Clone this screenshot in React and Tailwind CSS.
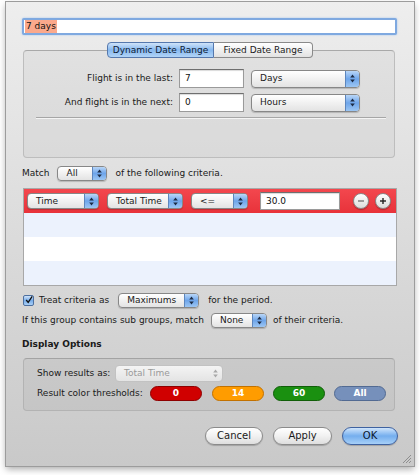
import React from 'react';

// Little up/down arrows shown in the blue end of an Aqua popup
const UpDown = ({ color = '#1c2b44' }) => (
  <svg width="5" height="9" viewBox="0 0 5 9">
    <path d="M2.5 0.5 L4.8 3.5 H0.2 Z" fill={color} />
    <path d="M2.5 8.5 L4.8 5.5 H0.2 Z" fill={color} />
  </svg>
);

const Popup = ({ label, className = '', disabled = false }) => (
  <div
    className={`flex items-stretch overflow-hidden rounded-[4px] border bg-gradient-to-b ${
      disabled
        ? 'border-[#c2c2c2] from-[#f4f4f4] to-[#e4e4e4] text-[#9a9a9a]'
        : 'border-[#878787] from-white to-[#e3e3e3] text-[#1a1a1a] shadow-[0_1px_1px_rgba(0,0,0,0.18)]'
    } ${className}`}
  >
    <span className="flex flex-1 items-center truncate pl-[8px]">{label}</span>
    {disabled ? (
      <span className="flex w-[14px] items-center justify-center">
        <UpDown color="#a8a8a8" />
      </span>
    ) : (
      <span className="flex w-[14px] items-center justify-center border-l border-[#5d86bd] bg-gradient-to-b from-[#b9d6f7] via-[#6ea5ea] to-[#9cc6f3]">
        <UpDown />
      </span>
    )}
  </div>
);

const TextField = ({ value, className = '' }) => (
  <div
    className={`flex items-center border border-[#9a9a9a] border-t-[#6f6f6f] bg-white pl-[5px] text-[#111] shadow-[inset_0_1px_1px_rgba(0,0,0,0.15)] ${className}`}
  >
    {value}
  </div>
);

const Pill = ({ label, className }) => (
  <div
    className={`flex h-[15px] w-[52px] items-center justify-center rounded-full border text-[9px] font-bold text-white ${className}`}
  >
    {label}
  </div>
);

const RoundButton = ({ sign }) => (
  <div className="flex h-[16px] w-[16px] items-center justify-center rounded-full border border-[#8a8a8a] bg-gradient-to-b from-white to-[#dcdcdc] shadow-[0_1px_1px_rgba(0,0,0,0.25)]">
    <svg width="8" height="8" viewBox="0 0 8 8">
      <rect x="1" y="3.3" width="6" height="1.4" fill={sign === '+' ? '#222' : '#7a7a7a'} />
      {sign === '+' && <rect x="3.3" y="1" width="1.4" height="6" fill="#222" />}
    </svg>
  </div>
);

const PushButton = ({ label, primary, className = '' }) => (
  <div
    className={`flex h-[18px] items-center justify-center rounded-full border text-[10px] ${
      primary
        ? 'border-[#3f62a0] bg-gradient-to-b from-[#d0e5fb] via-[#74aeee] to-[#a7d0f8] text-[#0c1730]'
        : 'border-[#8b8b8b] bg-gradient-to-b from-white via-[#f1f1f1] to-[#dedede] text-[#1a1a1a]'
    } shadow-[0_1px_1px_rgba(0,0,0,0.2)] ${className}`}
  >
    {label}
  </div>
);

export default function App() {
  return (
    <div className="h-[475px] w-[420px] overflow-hidden bg-white pt-[2px] pl-[6px] font-['Lucida_Grande','DejaVu_Sans',sans-serif] text-[9px] leading-none text-[#1a1a1a]">
      {/* Sheet window */}
      <div className="relative flex h-[464px] w-[408px] flex-col bg-gradient-to-b from-[#eeeeee] to-[#c9c9c9] shadow-[0_0_0_1px_#9c9c9c,0_3px_7px_rgba(0,0,0,0.35)]">
        {/* Name field */}
        <div className="ml-[16px] mt-[16px] flex h-[17px] w-[375px] items-center rounded-[2px] border-[2px] border-[#7fa9e0] bg-white pl-[1px] shadow-[0_0_2px_#9cc0ef]">
          <span className="flex h-[13px] items-center bg-[#fba98c] px-[1px] text-[#111]">7 days</span>
        </div>

        {/* Date range tab box */}
        <div className="relative z-10 mt-[7px] ml-[101px] flex h-[16px] w-[206px]">
          <div className="flex w-[107px] items-center justify-center rounded-l-[4px] border border-[#5578ad] bg-gradient-to-b from-[#cfe3f9] via-[#86b8ef] to-[#b1d4f7] text-[#0d1a33]">
            Dynamic Date Range
          </div>
          <div className="flex flex-1 items-center justify-center rounded-r-[4px] border border-l-0 border-[#8a8a8a] bg-gradient-to-b from-white to-[#e2e2e2]">
            Fixed Date Range
          </div>
        </div>
        <div className="-mt-[8px] ml-[17px] flex h-[108px] w-[372px] flex-col rounded-[4px] border border-[#bdbdbd] border-t-[#a9a9a9] bg-black/[0.035]">
          <div className="mt-[18px] flex h-[19px] items-center">
            <span className="w-[149px] text-right">Flight is in the last:</span>
            <TextField value="7" className="ml-[6px] h-[19px] w-[65px]" />
            <Popup label="Days" className="ml-[7px] h-[18px] w-[109px]" />
          </div>
          <div className="mt-[5px] flex h-[19px] items-center">
            <span className="w-[149px] text-right">And flight is in the next:</span>
            <TextField value="0" className="ml-[6px] h-[19px] w-[65px]" />
            <Popup label="Hours" className="ml-[7px] h-[18px] w-[109px]" />
          </div>
          <div className="ml-[12px] mt-[5px] h-[2px] w-[350px] border-t border-b border-t-[#a6a6a6] border-b-[#f4f4f4]" />
        </div>

        {/* Match row */}
        <div className="ml-[16px] mt-[8px] flex h-[15px] items-center">
          <span>Match</span>
          <Popup label="All" className="ml-[8px] h-[15px] w-[50px]" />
          <span className="ml-[8px]">of the following criteria.</span>
        </div>

        {/* Criteria table */}
        <div className="ml-[17px] mt-[7px] flex w-[374px] flex-col border border-[#a8a8a8]">
          <div className="flex h-[24px] items-center bg-gradient-to-b from-[#f3474e] to-[#e8323a] pl-[3px]">
            <Popup label="Time" className="h-[16px] w-[72px]" />
            <Popup label="Total Time" className="ml-[8px] h-[16px] w-[76px]" />
            <Popup label="<=" className="ml-[8px] h-[16px] w-[57px]" />
            <TextField value="30.0" className="ml-[12px] h-[18px] w-[80px]" />
            <div className="ml-[13px]">
              <RoundButton sign="-" />
            </div>
            <div className="ml-[6px]">
              <RoundButton sign="+" />
            </div>
          </div>
          <div className="h-[24px] bg-[#ecf2fd]" />
          <div className="h-[24px] bg-white" />
          <div className="h-[24px] bg-[#ecf2fd]" />
        </div>

        {/* Treat criteria row */}
        <div className="ml-[17px] mt-[7px] flex h-[15px] items-center">
          <div className="flex h-[11px] w-[11px] items-center justify-center rounded-[2px] border border-[#4d6f9f] bg-gradient-to-b from-[#cfe2f8] via-[#78adea] to-[#a9cff6]">
            <svg width="10" height="10" viewBox="0 0 10 10" className="-mt-[2px] ml-[1px]">
              <path d="M1.5 5 L4 8 L9 0.5" stroke="#111" strokeWidth="1.6" fill="none" />
            </svg>
          </div>
          <span className="ml-[5px]">Treat criteria as</span>
          <Popup label="Maximums" className="ml-[9px] h-[15px] w-[81px]" />
          <span className="ml-[9px]">for the period.</span>
        </div>
        <div className="ml-[16px] mt-[5px] flex h-[15px] items-center">
          <span>If this group contains sub groups, match</span>
          <Popup label="None" className="ml-[7px] h-[15px] w-[56px]" />
          <span className="ml-[6px]">of their criteria.</span>
        </div>

        {/* Display options */}
        <div className="ml-[16px] mt-[12px] font-bold">Display Options</div>
        <div className="ml-[17px] mt-[9px] flex h-[53px] w-[372px] flex-col rounded-[4px] border border-[#b3b3b3] border-t-[#a3a3a3] bg-black/[0.035]">
          <div className="mt-[6px] flex h-[17px] items-center">
            <span className="ml-[13px] w-[78px]">Show results as:</span>
            <Popup label="Total Time" disabled className="h-[17px] w-[108px]" />
          </div>
          <div className="mt-[4px] flex h-[15px] items-center">
            <span className="ml-[13px] w-[113px]">Result color thresholds:</span>
            <Pill label="0" className="border-[#8e0000] bg-[#d00000]" />
            <Pill label="14" className="ml-[10px] border-[#c27100] bg-[#ff9c00]" />
            <Pill label="60" className="ml-[9px] border-[#105e08] bg-[#1a9010]" />
            <Pill label="All" className="ml-[9px] border-[#526a92] bg-[#7690bb]" />
          </div>
        </div>

        {/* Buttons */}
        <div className="ml-[199px] mt-[16px] flex items-center">
          <PushButton label="Cancel" className="w-[58px]" />
          <PushButton label="Apply" className="ml-[10px] w-[59px]" />
          <PushButton label="OK" primary className="ml-[10px] w-[56px]" />
        </div>

        {/* Resize grip */}
        <svg width="11" height="11" viewBox="0 0 11 11" className="absolute bottom-[2px] right-[2px]">
          <path d="M10 2 L2 10 M10 5 L5 10 M10 8 L8 10" stroke="#8e8e8e" strokeWidth="1" />
        </svg>
      </div>
    </div>
  );
}
